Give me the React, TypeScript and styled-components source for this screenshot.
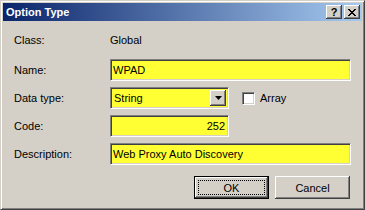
import { FC } from 'react';
import styled, { createGlobalStyle, css } from 'styled-components';

const GlobalStyle = createGlobalStyle`
  html, body {
    margin: 0;
    padding: 0;
  }
  body {
    font-family: 'Liberation Sans', Arial, sans-serif;
    font-size: 11px;
    color: #000;
    background: #d4d0c8;
  }
`;

const raised = css`
  background: #d4d0c8;
  box-shadow: inset -1px -1px #404040, inset 1px 1px #fff, inset -2px -2px #808080, inset 2px 2px #d4d0c8;
`;

const sunken = css`
  border: 1px solid;
  border-color: #808080 #fff #fff #808080;
  box-shadow: inset 1px 1px #404040, inset -1px -1px #d4d0c8;
`;

export default function App() {
  return (
    <>
      <GlobalStyle />
      <Window>
        <TitleBar>
          <Title>Option Type</Title>
          <TitleButtons>
            <CaptionButton aria-label="Help">
              <HelpGlyph>?</HelpGlyph>
            </CaptionButton>
            <CaptionButton aria-label="Close">
              <svg width="8" height="7" viewBox="0 0 8 7">
                <path d="M0 0h2v1H0zM6 0h2v1H6zM1 1h2v1H1zM5 1h2v1H5zM2 2h4v1H2zM3 3h2v1H3zM2 4h4v1H2zM1 5h2v1H1zM5 5h2v1H5zM0 6h2v1H0zM6 6h2v1H6z" fill="#000" />
              </svg>
            </CaptionButton>
          </TitleButtons>
        </TitleBar>
        <DialogBody>
          <Form>
            <FieldLabel>Class:</FieldLabel>
            <StaticText>Global</StaticText>

            <FieldLabel>Name:</FieldLabel>
            <TextField readOnly defaultValue="WPAD" />

            <FieldLabel>Data type:</FieldLabel>
            <ControlRow>
              <DropDown value="String" />
              <CheckLabel>
                <CheckBox />
                Array
              </CheckLabel>
            </ControlRow>

            <FieldLabel>Code:</FieldLabel>
            <TextField readOnly defaultValue="252" $width={119} $align="right" />

            <FieldLabel>Description:</FieldLabel>
            <TextField readOnly defaultValue="Web Proxy Auto Discovery" />
          </Form>
          <Footer>
            <PushButton $default>
              <ButtonFace $focused>OK</ButtonFace>
            </PushButton>
            <PushButton>
              <ButtonFace>Cancel</ButtonFace>
            </PushButton>
          </Footer>
        </DialogBody>
      </Window>
    </>
  );
}

const DropDown: FC<{ value: string }> = ({ value }) => (
  <Select>
    <SelectText>{value}</SelectText>
    <SelectArrow>
      <svg width="7" height="4" viewBox="0 0 7 4">
        <path d="M0 0h7L3.5 4z" fill="#000" />
      </svg>
    </SelectArrow>
  </Select>
);

const Window = styled.div`
  width: 365px;
  height: 210px;
  box-sizing: border-box;
  padding: 2px;
  border: 1px solid;
  border-color: #d4d0c8 #404040 #404040 #d4d0c8;
  box-shadow: inset 1px 1px #fff, inset -1px -1px #808080;
  background: #d4d0c8;
  display: flex;
  flex-direction: column;
`;

const TitleBar = styled.div`
  height: 18px;
  display: flex;
  align-items: center;
  justify-content: space-between;
  padding: 0 2px 0 3px;
  background: linear-gradient(to right, #0a246a, #a6caf0);
`;

const Title = styled.span`
  color: #fff;
  font-weight: bold;
  font-size: 11px;
`;

const TitleButtons = styled.div`
  display: flex;
  gap: 2px;
`;

const CaptionButton = styled.div`
  ${raised};
  width: 16px;
  height: 14px;
  display: flex;
  align-items: center;
  justify-content: center;
`;

const HelpGlyph = styled.span`
  font-weight: bold;
  font-size: 11px;
  line-height: 1;
  margin-top: 1px;
`;

const DialogBody = styled.div`
  flex: 1;
  padding: 6px 11px 0 11px;
  display: flex;
  flex-direction: column;
`;

const Form = styled.div`
  display: grid;
  grid-template-columns: 96px 1fr;
  grid-template-rows: 26px repeat(4, 22px);
  row-gap: 6px;
  align-items: center;
`;

const FieldLabel = styled.span`
  line-height: 13px;
`;

const StaticText = styled.span`
  line-height: 13px;
`;

const TextField = styled.input<{ $width?: number; $align?: string }>`
  ${sunken};
  box-sizing: border-box;
  width: ${(p) => (p.$width ? `${p.$width}px` : '100%')};
  height: 22px;
  margin: 0;
  padding: 0 3px 0 2px;
  background: #ffff33;
  font: inherit;
  color: #000;
  text-align: ${(p) => p.$align ?? 'left'};
  outline: none;
`;

const ControlRow = styled.div`
  display: flex;
  align-items: center;
  gap: 13px;
`;

const Select = styled.div`
  ${sunken};
  box-sizing: border-box;
  width: 119px;
  height: 22px;
  background: #ffff33;
  display: flex;
  align-items: stretch;
  padding: 2px;
`;

const SelectText = styled.span`
  flex: 1;
  display: flex;
  align-items: center;
  padding-left: 1px;
`;

const SelectArrow = styled.span`
  ${raised};
  width: 16px;
  display: flex;
  align-items: center;
  justify-content: center;
`;

const CheckLabel = styled.label`
  display: flex;
  align-items: center;
  gap: 5px;
`;

const CheckBox = styled.span`
  ${sunken};
  box-sizing: border-box;
  width: 13px;
  height: 13px;
  background: #fff;
`;

const Footer = styled.div`
  display: flex;
  justify-content: flex-end;
  gap: 6px;
  margin-top: 11px;
  padding-right: 1px;
`;

const PushButton = styled.button<{ $default?: boolean }>`
  ${raised};
  box-sizing: border-box;
  width: 75px;
  height: 23px;
  margin: 0;
  padding: 3px;
  border: none;
  font: inherit;
  color: #000;
  display: flex;
  ${(p) =>
    p.$default &&
    css`
      border: 1px solid #000;
    `}
`;

const ButtonFace = styled.span<{ $focused?: boolean }>`
  flex: 1;
  display: flex;
  align-items: center;
  justify-content: center;
  border: 1px dotted ${(p) => (p.$focused ? '#000' : 'transparent')};
`;
